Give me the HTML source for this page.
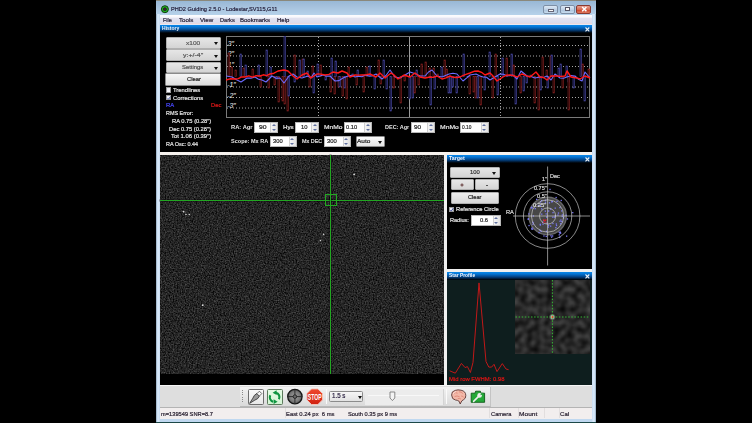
<!DOCTYPE html>
<html><head><meta charset="utf-8">
<style>
*{margin:0;padding:0;box-sizing:border-box}
html,body{width:752px;height:423px;overflow:hidden;background:#000;font-family:"Liberation Sans",sans-serif}
.a{position:absolute}
.t{position:absolute;white-space:pre;line-height:1;transform-origin:0 0;-webkit-text-stroke:0.2px currentColor}
.frame{left:156px;top:0;width:440px;height:423px;background:linear-gradient(#98b8d6 0,#a4c0dc 5px,#b6d2ea 14px,#c0d8f0 30px);border-top:1px solid #8a887c;}
.menubar{left:160px;top:15px;width:432px;height:10px;background:linear-gradient(#fcfcfe 0,#f8f8fc 2px,#e2e2f0 3.5px,#dcdcec 8px,#ead8dc 8.5px,#e6e8f4 9.5px)}
.cap{height:8px;background:linear-gradient(#0a88e8,#0474d4 2px,#034080 5px,#000 8px)}
.btn{background:linear-gradient(#e6e6e6,#d4d4d4);border:1px solid #b0b0b0;border-radius:1px}
.btnw{background:linear-gradient(#f6f6f6,#dcdcdc);border:1px solid #8a8a8a;border-radius:1px}
.inp{background:#fff;border:1px solid #b8b8b8}
.spin{background:linear-gradient(90deg,#f4f4f4,#e2e2e2);border-left:1px solid #d0d0d0}
.cb{background:linear-gradient(135deg,#e4e4ec,#fcfcff);border:0.8px solid #9a9a9a}
</style></head><body>
<div class="a frame"></div>
<div class="a" style="left:156px;top:14px;width:4px;height:409px;background:linear-gradient(90deg,#8a9cb0 0,#c4dcf2 1px,#dcecfc 2px,#c8dcf2 4px)"></div>
<div class="a" style="left:592px;top:14px;width:4px;height:409px;background:linear-gradient(90deg,#c8dcf2 0,#dcecfc 2px,#c4dcf2 3px,#8a9cb0 4px)"></div>
<!-- title bar -->
<svg class="a" style="left:160px;top:4px" width="10" height="11"><circle cx="4.9" cy="5.2" r="3.5" fill="#22c022" stroke="#0a2a0a" stroke-width="0.9"/><circle cx="4.9" cy="5.2" r="1.6" fill="#40203a" stroke="#101010" stroke-width="0.5"/></svg>
<div class="a" style="left:543px;top:5px;width:15px;height:9px;border:1px solid #7d8fa6;border-radius:2px;background:linear-gradient(#dce8f4,#c0d2e6 50%,#a8c0da 51%,#c8dcee)"></div>
<div class="a" style="left:547.5px;top:9px;width:6.5px;height:2.6px;background:#fafafa;border:0.7px solid #667"></div>
<div class="a" style="left:560px;top:5px;width:15px;height:9px;border:1px solid #7d8fa6;border-radius:2px;background:linear-gradient(#dce8f4,#c0d2e6 50%,#a8c0da 51%,#c8dcee)"></div>
<div class="a" style="left:564.5px;top:6.8px;width:5.5px;height:4.6px;background:#fafafa;border:0.9px solid #556"></div>
<div class="a" style="left:576px;top:5px;width:15px;height:9px;border:1px solid #8a3a30;border-radius:2px;background:linear-gradient(#e8a090,#d86a50 50%,#c43a20 51%,#e07a60)"></div>
<svg class="a" style="left:580.5px;top:6.3px" width="7" height="7"><path d="M1.2 1 L5.4 5.2 M5.4 1 L1.2 5.2" stroke="#fff" stroke-width="1.5"/></svg>
<!-- menubar -->
<div class="a menubar"></div>
<!-- history panel -->
<div class="a" style="left:160px;top:25px;width:432px;height:127px;background:#000"></div>
<div class="a cap" style="left:160px;top:25px;width:432px"></div>
<svg class="a" style="left:584.6px;top:26.6px" width="5" height="5"><path d="M0.5 0.5 L4.3 4.3 M4.3 0.5 L0.5 4.3" stroke="#f0f4f8" stroke-width="1.1"/></svg>
<div class="a btn" style="left:166px;top:36.5px;width:55px;height:12px"></div>
<div class="a btn" style="left:166px;top:49px;width:55px;height:11.5px"></div>
<div class="a btn" style="left:166px;top:61.5px;width:55px;height:11.5px"></div>
<div class="a btnw" style="left:165px;top:73px;width:56px;height:12.5px"></div>
<div class="a" style="left:213.5px;top:42px;width:0;height:0;border-left:2.5px solid transparent;border-right:2.5px solid transparent;border-top:3px solid #111"></div><div class="a" style="left:213.5px;top:54.5px;width:0;height:0;border-left:2.5px solid transparent;border-right:2.5px solid transparent;border-top:3px solid #111"></div><div class="a" style="left:213.5px;top:66.5px;width:0;height:0;border-left:2.5px solid transparent;border-right:2.5px solid transparent;border-top:3px solid #111"></div>
<div class="a cb" style="left:165.8px;top:87.3px;width:5.5px;height:5.5px"></div>
<div class="a cb" style="left:165.8px;top:94.8px;width:5.5px;height:5.5px"></div>
<svg class="a" style="left:166px;top:95px" width="6" height="6"><path d="M1.6 3.2 L2.6 4.2 L4.4 1.6" stroke="#5060a8" stroke-width="1" fill="none"/></svg>
<!-- graph -->
<svg class="a" style="left:226px;top:36px" width="365" height="82" viewBox="0 0 365 82">
<rect x="0.5" y="0.5" width="363" height="81" fill="#000" stroke="#7a7a7a" stroke-width="1"/>
<g stroke="#a8a8a8" stroke-width="1" stroke-dasharray="1,2">
<line x1="1" y1="9.5" x2="363" y2="9.5"/>
<line x1="1" y1="20" x2="363" y2="20"/>
<line x1="1" y1="30.5" x2="363" y2="30.5"/>
<line x1="1" y1="51" x2="363" y2="51"/>
<line x1="1" y1="61.5" x2="363" y2="61.5"/>
<line x1="1" y1="72" x2="363" y2="72"/>
<line x1="92.5" y1="1" x2="92.5" y2="81"/>
<line x1="274.5" y1="1" x2="274.5" y2="81"/>
</g>
<line x1="183.5" y1="1" x2="183.5" y2="81" stroke="#9a9a9a" stroke-width="1"/>
<g font-family="Liberation Sans" font-size="6.8" fill="#d4d4d4" font-style="italic" stroke="#d4d4d4" stroke-width="0.15">
<text x="1.8" y="9.6">3"</text><text x="1.8" y="20.1">2"</text><text x="1.8" y="30.6">1"</text>
<text x="1.2" y="51.1">-1"</text><text x="1.2" y="61.6">-2"</text><text x="1.2" y="72.1">-3"</text>
</g>
<rect x="2" y="17.0" width="1.6" height="23.5" fill="#1a0404" stroke="#8a2222" stroke-width="0.6"/>
<rect x="5" y="31.0" width="1.6" height="9.5" fill="#1a0404" stroke="#8a2222" stroke-width="0.6"/>
<rect x="9" y="34.0" width="1.6" height="6.5" fill="#1a0404" stroke="#8a2222" stroke-width="0.6"/>
<rect x="14" y="18.0" width="1.6" height="22.5" fill="#0a0a24" stroke="#4a4aa8" stroke-width="0.6"/>
<rect x="17" y="32.0" width="1.6" height="8.5" fill="#1a0404" stroke="#8a2222" stroke-width="0.6"/>
<rect x="19" y="29.0" width="1.6" height="11.5" fill="#0a0a24" stroke="#4a4aa8" stroke-width="0.6"/>
<rect x="26" y="33.0" width="1.6" height="7.5" fill="#1a0404" stroke="#8a2222" stroke-width="0.6"/>
<rect x="32" y="29.0" width="1.6" height="11.5" fill="#0a0a24" stroke="#4a4aa8" stroke-width="0.6"/>
<rect x="34" y="40.5" width="1.6" height="10.5" fill="#1a0404" stroke="#8a2222" stroke-width="0.6"/>
<rect x="40" y="14.0" width="1.6" height="26.5" fill="#0a0a24" stroke="#4a4aa8" stroke-width="0.6"/>
<rect x="42" y="40.5" width="1.6" height="11.5" fill="#1a0404" stroke="#8a2222" stroke-width="0.6"/>
<rect x="44" y="31.0" width="1.6" height="9.5" fill="#0a0a24" stroke="#4a4aa8" stroke-width="0.6"/>
<rect x="48" y="40.5" width="1.6" height="8.5" fill="#1a0404" stroke="#8a2222" stroke-width="0.6"/>
<rect x="50" y="40.5" width="1.6" height="2.5" fill="#0a0a24" stroke="#4a4aa8" stroke-width="0.6"/>
<rect x="52" y="40.5" width="1.6" height="25.5" fill="#1a0404" stroke="#8a2222" stroke-width="0.6"/>
<rect x="56" y="40.5" width="1.6" height="24.5" fill="#1a0404" stroke="#8a2222" stroke-width="0.6"/>
<rect x="58" y="40.5" width="1.6" height="27.5" fill="#1a0404" stroke="#8a2222" stroke-width="0.6"/>
<rect x="58" y="0.0" width="1.6" height="40.5" fill="#0a0a24" stroke="#4a4aa8" stroke-width="0.6"/>
<rect x="61" y="40.5" width="1.6" height="34.5" fill="#1a0404" stroke="#8a2222" stroke-width="0.6"/>
<rect x="62" y="40.5" width="1.6" height="19.5" fill="#0a0a24" stroke="#4a4aa8" stroke-width="0.6"/>
<rect x="68" y="40.5" width="1.6" height="5.5" fill="#0a0a24" stroke="#4a4aa8" stroke-width="0.6"/>
<rect x="68" y="19.0" width="1.6" height="21.5" fill="#1a0404" stroke="#8a2222" stroke-width="0.6"/>
<rect x="73" y="24.0" width="1.6" height="16.5" fill="#0a0a24" stroke="#4a4aa8" stroke-width="0.6"/>
<rect x="76" y="23.0" width="1.6" height="17.5" fill="#1a0404" stroke="#8a2222" stroke-width="0.6"/>
<rect x="77" y="23.0" width="1.6" height="17.5" fill="#0a0a24" stroke="#4a4aa8" stroke-width="0.6"/>
<rect x="81" y="35.0" width="1.6" height="5.5" fill="#0a0a24" stroke="#4a4aa8" stroke-width="0.6"/>
<rect x="83" y="40.5" width="1.6" height="10.5" fill="#1a0404" stroke="#8a2222" stroke-width="0.6"/>
<rect x="86" y="30.0" width="1.6" height="10.5" fill="#1a0404" stroke="#8a2222" stroke-width="0.6"/>
<rect x="87" y="40.5" width="1.6" height="16.5" fill="#0a0a24" stroke="#4a4aa8" stroke-width="0.6"/>
<rect x="91" y="28.0" width="1.6" height="12.5" fill="#0a0a24" stroke="#4a4aa8" stroke-width="0.6"/>
<rect x="94" y="29.0" width="1.6" height="11.5" fill="#1a0404" stroke="#8a2222" stroke-width="0.6"/>
<rect x="99" y="40.5" width="1.6" height="3.5" fill="#0a0a24" stroke="#4a4aa8" stroke-width="0.6"/>
<rect x="105" y="22.0" width="1.6" height="18.5" fill="#0a0a24" stroke="#4a4aa8" stroke-width="0.6"/>
<rect x="104" y="40.5" width="1.6" height="15.5" fill="#1a0404" stroke="#8a2222" stroke-width="0.6"/>
<rect x="108" y="40.5" width="1.6" height="17.5" fill="#1a0404" stroke="#8a2222" stroke-width="0.6"/>
<rect x="109" y="25.0" width="1.6" height="15.5" fill="#0a0a24" stroke="#4a4aa8" stroke-width="0.6"/>
<rect x="112" y="40.5" width="1.6" height="10.5" fill="#1a0404" stroke="#8a2222" stroke-width="0.6"/>
<rect x="113" y="40.5" width="1.6" height="10.5" fill="#0a0a24" stroke="#4a4aa8" stroke-width="0.6"/>
<rect x="116" y="40.5" width="1.6" height="19.5" fill="#1a0404" stroke="#8a2222" stroke-width="0.6"/>
<rect x="118" y="40.5" width="1.6" height="11.5" fill="#0a0a24" stroke="#4a4aa8" stroke-width="0.6"/>
<rect x="120" y="40.5" width="1.6" height="22.5" fill="#1a0404" stroke="#8a2222" stroke-width="0.6"/>
<rect x="122" y="31.0" width="1.6" height="9.5" fill="#1a0404" stroke="#8a2222" stroke-width="0.6"/>
<rect x="126" y="38.0" width="1.6" height="2.5" fill="#0a0a24" stroke="#4a4aa8" stroke-width="0.6"/>
<rect x="130" y="40.5" width="1.6" height="8.5" fill="#1a0404" stroke="#8a2222" stroke-width="0.6"/>
<rect x="131" y="34.0" width="1.6" height="6.5" fill="#0a0a24" stroke="#4a4aa8" stroke-width="0.6"/>
<rect x="137" y="40.5" width="1.6" height="15.5" fill="#1a0404" stroke="#8a2222" stroke-width="0.6"/>
<rect x="140" y="31.0" width="1.6" height="9.5" fill="#1a0404" stroke="#8a2222" stroke-width="0.6"/>
<rect x="143" y="30.0" width="1.6" height="10.5" fill="#0a0a24" stroke="#4a4aa8" stroke-width="0.6"/>
<rect x="148" y="40.5" width="1.6" height="12.5" fill="#0a0a24" stroke="#4a4aa8" stroke-width="0.6"/>
<rect x="152" y="24.0" width="1.6" height="16.5" fill="#1a0404" stroke="#8a2222" stroke-width="0.6"/>
<rect x="154" y="40.5" width="1.6" height="7.5" fill="#1a0404" stroke="#8a2222" stroke-width="0.6"/>
<rect x="157" y="24.0" width="1.6" height="16.5" fill="#0a0a24" stroke="#4a4aa8" stroke-width="0.6"/>
<rect x="160" y="40.5" width="1.6" height="12.5" fill="#0a0a24" stroke="#4a4aa8" stroke-width="0.6"/>
<rect x="164" y="40.5" width="1.6" height="34.5" fill="#0a0a24" stroke="#4a4aa8" stroke-width="0.6"/>
<rect x="167" y="40.5" width="1.6" height="11.5" fill="#1a0404" stroke="#8a2222" stroke-width="0.6"/>
<rect x="174" y="40.5" width="1.6" height="26.5" fill="#1a0404" stroke="#8a2222" stroke-width="0.6"/>
<rect x="178" y="40.5" width="1.6" height="4.5" fill="#1a0404" stroke="#8a2222" stroke-width="0.6"/>
<rect x="183" y="40.5" width="1.6" height="22.5" fill="#0a0a24" stroke="#4a4aa8" stroke-width="0.6"/>
<rect x="186" y="40.5" width="1.6" height="21.5" fill="#0a0a24" stroke="#4a4aa8" stroke-width="0.6"/>
<rect x="188" y="40.5" width="1.6" height="16.5" fill="#1a0404" stroke="#8a2222" stroke-width="0.6"/>
<rect x="190" y="34.0" width="1.6" height="6.5" fill="#0a0a24" stroke="#4a4aa8" stroke-width="0.6"/>
<rect x="192" y="40.5" width="1.6" height="8.5" fill="#1a0404" stroke="#8a2222" stroke-width="0.6"/>
<rect x="195" y="28.0" width="1.6" height="12.5" fill="#1a0404" stroke="#8a2222" stroke-width="0.6"/>
<rect x="199" y="26.0" width="1.6" height="14.5" fill="#1a0404" stroke="#8a2222" stroke-width="0.6"/>
<rect x="203" y="32.0" width="1.6" height="8.5" fill="#1a0404" stroke="#8a2222" stroke-width="0.6"/>
<rect x="204" y="40.5" width="1.6" height="28.5" fill="#0a0a24" stroke="#4a4aa8" stroke-width="0.6"/>
<rect x="207" y="32.0" width="1.6" height="8.5" fill="#1a0404" stroke="#8a2222" stroke-width="0.6"/>
<rect x="208" y="40.5" width="1.6" height="12.5" fill="#0a0a24" stroke="#4a4aa8" stroke-width="0.6"/>
<rect x="211" y="38.0" width="1.6" height="2.5" fill="#1a0404" stroke="#8a2222" stroke-width="0.6"/>
<rect x="215" y="31.0" width="1.6" height="9.5" fill="#0a0a24" stroke="#4a4aa8" stroke-width="0.6"/>
<rect x="218" y="24.0" width="1.6" height="16.5" fill="#1a0404" stroke="#8a2222" stroke-width="0.6"/>
<rect x="220" y="33.0" width="1.6" height="7.5" fill="#1a0404" stroke="#8a2222" stroke-width="0.6"/>
<rect x="222" y="40.5" width="1.6" height="16.5" fill="#0a0a24" stroke="#4a4aa8" stroke-width="0.6"/>
<rect x="226" y="40.5" width="1.6" height="10.5" fill="#0a0a24" stroke="#4a4aa8" stroke-width="0.6"/>
<rect x="224" y="40.5" width="1.6" height="16.5" fill="#0a0a24" stroke="#4a4aa8" stroke-width="0.6"/>
<rect x="230" y="40.5" width="1.6" height="16.5" fill="#0a0a24" stroke="#4a4aa8" stroke-width="0.6"/>
<rect x="237" y="18.0" width="1.6" height="22.5" fill="#0a0a24" stroke="#4a4aa8" stroke-width="0.6"/>
<rect x="241" y="40.5" width="1.6" height="0.5" fill="#0a0a24" stroke="#4a4aa8" stroke-width="0.6"/>
<rect x="243" y="40.5" width="1.6" height="17.5" fill="#1a0404" stroke="#8a2222" stroke-width="0.6"/>
<rect x="247" y="40.5" width="1.6" height="15.5" fill="#1a0404" stroke="#8a2222" stroke-width="0.6"/>
<rect x="249" y="40.5" width="1.6" height="21.5" fill="#1a0404" stroke="#8a2222" stroke-width="0.6"/>
<rect x="251" y="40.5" width="1.6" height="21.5" fill="#0a0a24" stroke="#4a4aa8" stroke-width="0.6"/>
<rect x="254" y="40.5" width="1.6" height="28.5" fill="#1a0404" stroke="#8a2222" stroke-width="0.6"/>
<rect x="258" y="40.5" width="1.6" height="13.5" fill="#0a0a24" stroke="#4a4aa8" stroke-width="0.6"/>
<rect x="263" y="16.0" width="1.6" height="24.5" fill="#0a0a24" stroke="#4a4aa8" stroke-width="0.6"/>
<rect x="266" y="40.5" width="1.6" height="21.5" fill="#1a0404" stroke="#8a2222" stroke-width="0.6"/>
<rect x="269" y="18.0" width="1.6" height="22.5" fill="#1a0404" stroke="#8a2222" stroke-width="0.6"/>
<rect x="271" y="40.5" width="1.6" height="18.5" fill="#0a0a24" stroke="#4a4aa8" stroke-width="0.6"/>
<rect x="276" y="22.0" width="1.6" height="18.5" fill="#0a0a24" stroke="#4a4aa8" stroke-width="0.6"/>
<rect x="280" y="22.0" width="1.6" height="18.5" fill="#1a0404" stroke="#8a2222" stroke-width="0.6"/>
<rect x="285" y="18.0" width="1.6" height="22.5" fill="#0a0a24" stroke="#4a4aa8" stroke-width="0.6"/>
<rect x="287" y="29.0" width="1.6" height="11.5" fill="#1a0404" stroke="#8a2222" stroke-width="0.6"/>
<rect x="289" y="40.5" width="1.6" height="27.5" fill="#0a0a24" stroke="#4a4aa8" stroke-width="0.6"/>
<rect x="294" y="40.5" width="1.6" height="16.5" fill="#1a0404" stroke="#8a2222" stroke-width="0.6"/>
<rect x="297" y="40.5" width="1.6" height="14.5" fill="#0a0a24" stroke="#4a4aa8" stroke-width="0.6"/>
<rect x="300" y="40.5" width="1.6" height="6.5" fill="#0a0a24" stroke="#4a4aa8" stroke-width="0.6"/>
<rect x="304" y="39.0" width="1.6" height="1.5" fill="#1a0404" stroke="#8a2222" stroke-width="0.6"/>
<rect x="308" y="40.5" width="1.6" height="26.5" fill="#1a0404" stroke="#8a2222" stroke-width="0.6"/>
<rect x="312" y="40.5" width="1.6" height="33.5" fill="#1a0404" stroke="#8a2222" stroke-width="0.6"/>
<rect x="314" y="40.5" width="1.6" height="13.5" fill="#0a0a24" stroke="#4a4aa8" stroke-width="0.6"/>
<rect x="316" y="21.0" width="1.6" height="19.5" fill="#1a0404" stroke="#8a2222" stroke-width="0.6"/>
<rect x="320" y="34.0" width="1.6" height="6.5" fill="#1a0404" stroke="#8a2222" stroke-width="0.6"/>
<rect x="321" y="40.5" width="1.6" height="11.5" fill="#0a0a24" stroke="#4a4aa8" stroke-width="0.6"/>
<rect x="324" y="20.0" width="1.6" height="20.5" fill="#1a0404" stroke="#8a2222" stroke-width="0.6"/>
<rect x="325" y="19.0" width="1.6" height="21.5" fill="#0a0a24" stroke="#4a4aa8" stroke-width="0.6"/>
<rect x="327" y="40.5" width="1.6" height="16.5" fill="#1a0404" stroke="#8a2222" stroke-width="0.6"/>
<rect x="332" y="32.0" width="1.6" height="8.5" fill="#0a0a24" stroke="#4a4aa8" stroke-width="0.6"/>
<rect x="334" y="28.0" width="1.6" height="12.5" fill="#0a0a24" stroke="#4a4aa8" stroke-width="0.6"/>
<rect x="336" y="40.5" width="1.6" height="11.5" fill="#1a0404" stroke="#8a2222" stroke-width="0.6"/>
<rect x="340" y="30.0" width="1.6" height="10.5" fill="#0a0a24" stroke="#4a4aa8" stroke-width="0.6"/>
<rect x="342" y="40.5" width="1.6" height="5.5" fill="#0a0a24" stroke="#4a4aa8" stroke-width="0.6"/>
<rect x="342" y="40.5" width="1.6" height="33.5" fill="#1a0404" stroke="#8a2222" stroke-width="0.6"/>
<rect x="347" y="40.5" width="1.6" height="11.5" fill="#0a0a24" stroke="#4a4aa8" stroke-width="0.6"/>
<rect x="354" y="13.0" width="1.6" height="27.5" fill="#0a0a24" stroke="#4a4aa8" stroke-width="0.6"/>
<rect x="356" y="28.0" width="1.6" height="12.5" fill="#1a0404" stroke="#8a2222" stroke-width="0.6"/>
<rect x="358" y="40.5" width="1.6" height="24.5" fill="#0a0a24" stroke="#4a4aa8" stroke-width="0.6"/>
<rect x="362" y="33.0" width="1.6" height="7.5" fill="#1a0404" stroke="#8a2222" stroke-width="0.6"/>
<polyline fill="none" stroke="#6c6cff" stroke-width="1.1" stroke-linejoin="round" points="0,40 6.0,41.0 10.5,43.8 15.0,46.0 21.0,42.0 25.0,42.099999999999994 29.0,41.0 32.5,43.3 36.0,44.0 40.0,46.0 46.0,40.0 50.0,42.2 54.0,42.0 58.0,47.0 63.0,40.0 67.0,38.0 71.0,41.0 76.0,42.0 82.0,40.0 85.0,42.0 88.0,37.0 91.0,41.0 97.0,39.0 100.5,40.099999999999994 104.0,40.0 109.0,45.0 113.0,44.599999999999994 117.0,42.0 122.0,40.0 125.5,39.3 129.0,41.0 132.3,40.2 135.7,40.8 139.0,39.0 142.5,39.900000000000006 146.0,40.0 150.0,38.0 156.0,43.0 160.0,39.5 164.0,34.0 169.0,41.0 174.0,42.0 179.0,39.0 184.0,36.0 190.0,38.0 194.0,40.0 199.0,40.0 202.5,36.0 206.0,34.0 211.0,40.0 216.0,41.0 219.5,39.400000000000006 223.0,38.0 227.0,37.3 231.0,38.0 237.0,45.0 240.5,42.099999999999994 244.0,39.0 250.0,38.0 253.5,39.7 257.0,41.0 260.5,41.2 264.0,44.0 269.0,41.0 274.0,38.0 277.5,38.3 281.0,40.0 287.0,39.0 291.0,43.0 295.0,35.0 301.0,40.0 305.0,40.400000000000006 309.0,42.0 314.0,41.0 317.5,41.599999999999994 321.0,40.0 325.0,44.0 329.0,38.0 334.0,42.0 337.5,42.2 341.0,41.0 345.0,39.599999999999994 349.0,40.0 352.5,43.3 356.0,45.0 359.0,36.0 364.0,42.0"/>
<polyline fill="none" stroke="#ff1818" stroke-width="1.4" stroke-linejoin="round" points="0,44 4.5,42.8 9.0,43.0 12.300000000000011,42.599999999999994 15.699999999999989,40.900000000000006 19.0,41.0 22.80000000000001,39.8 26.5,41.2 30.19999999999999,39.7 34.0,40.0 37.30000000000001,38.8 40.69999999999999,39.599999999999994 44.0,38.0 48.0,37.2 52.0,35.0 58.0,34.0 62.0,35.0 67.0,40.0 71.0,43.0 76.0,39.0 81.0,37.0 85.0,42.0 91.0,38.0 95.0,38.099999999999994 99.0,39.0 103.0,38.400000000000006 107.0,36.0 112.0,37.0 116.0,35.0 121.0,37.0 124.0,41.0 129.0,39.0 132.5,39.099999999999994 136.0,39.0 140.0,38.900000000000006 144.0,38.0 150.0,41.0 154.0,37.0 159.0,42.0 165.0,37.0 168.5,39.400000000000006 172.0,43.0 178.0,39.0 184.0,41.0 189.0,37.0 194.0,41.0 199.0,42.0 204.0,41.0 207.5,41.400000000000006 211.0,40.0 216.0,43.0 220.0,41.900000000000006 224.0,40.0 227.3,41.3 230.7,41.5 234.0,41.0 237.3,39.3 240.7,38.099999999999994 244.0,37.0 248.0,35.3 252.0,35.0 255.5,36.3 259.0,39.0 264.0,37.0 267.0,40.0 271.0,45.0 277.0,41.0 280.5,39.099999999999994 284.0,39.0 287.5,39.599999999999994 291.0,41.0 296.0,38.0 300.0,39.7 304.0,41.0 310.0,36.0 314.0,41.0 317.5,41.5 321.0,44.0 325.0,40.0 331.0,40.0 335.0,40.400000000000006 339.0,40.0 341.0,35.0 345.0,41.0 349.5,41.7 354.0,43.0 359.0,40.0 364.0,42.0"/>
</svg>
<!-- controls -->
<div class="a inp" style="left:254px;top:122px;width:24px;height:11px"></div><div class="a spin" style="left:270px;top:123px;width:7px;height:9px"></div><div class="a" style="left:271.5px;top:124px;width:0;height:0;border-left:2px solid transparent;border-right:2px solid transparent;border-bottom:2px solid #6070a0"></div><div class="a" style="left:271.5px;top:129px;width:0;height:0;border-left:2px solid transparent;border-right:2px solid transparent;border-top:2px solid #6070a0"></div><div class="a inp" style="left:295px;top:122px;width:24px;height:11px"></div><div class="a spin" style="left:311px;top:123px;width:7px;height:9px"></div><div class="a" style="left:312.5px;top:124px;width:0;height:0;border-left:2px solid transparent;border-right:2px solid transparent;border-bottom:2px solid #6070a0"></div><div class="a" style="left:312.5px;top:129px;width:0;height:0;border-left:2px solid transparent;border-right:2px solid transparent;border-top:2px solid #6070a0"></div><div class="a inp" style="left:344px;top:122px;width:28px;height:11px"></div><div class="a spin" style="left:364px;top:123px;width:7px;height:9px"></div><div class="a" style="left:365.5px;top:124px;width:0;height:0;border-left:2px solid transparent;border-right:2px solid transparent;border-bottom:2px solid #6070a0"></div><div class="a" style="left:365.5px;top:129px;width:0;height:0;border-left:2px solid transparent;border-right:2px solid transparent;border-top:2px solid #6070a0"></div><div class="a inp" style="left:411px;top:122px;width:24px;height:11px"></div><div class="a spin" style="left:427px;top:123px;width:7px;height:9px"></div><div class="a" style="left:428.5px;top:124px;width:0;height:0;border-left:2px solid transparent;border-right:2px solid transparent;border-bottom:2px solid #6070a0"></div><div class="a" style="left:428.5px;top:129px;width:0;height:0;border-left:2px solid transparent;border-right:2px solid transparent;border-top:2px solid #6070a0"></div><div class="a inp" style="left:460px;top:122px;width:28.5px;height:11px"></div><div class="a spin" style="left:480.5px;top:123px;width:7px;height:9px"></div><div class="a" style="left:482.0px;top:124px;width:0;height:0;border-left:2px solid transparent;border-right:2px solid transparent;border-bottom:2px solid #6070a0"></div><div class="a" style="left:482.0px;top:129px;width:0;height:0;border-left:2px solid transparent;border-right:2px solid transparent;border-top:2px solid #6070a0"></div><div class="a inp" style="left:270px;top:136px;width:26.5px;height:11px"></div><div class="a spin" style="left:288.5px;top:137px;width:7px;height:9px"></div><div class="a" style="left:290.0px;top:138px;width:0;height:0;border-left:2px solid transparent;border-right:2px solid transparent;border-bottom:2px solid #6070a0"></div><div class="a" style="left:290.0px;top:143px;width:0;height:0;border-left:2px solid transparent;border-right:2px solid transparent;border-top:2px solid #6070a0"></div><div class="a inp" style="left:324px;top:136px;width:26.5px;height:11px"></div><div class="a spin" style="left:342.5px;top:137px;width:7px;height:9px"></div><div class="a" style="left:344.0px;top:138px;width:0;height:0;border-left:2px solid transparent;border-right:2px solid transparent;border-bottom:2px solid #6070a0"></div><div class="a" style="left:344.0px;top:143px;width:0;height:0;border-left:2px solid transparent;border-right:2px solid transparent;border-top:2px solid #6070a0"></div>
<div class="a btnw" style="left:356px;top:136px;width:29px;height:11px;background:linear-gradient(#fafafa,#e4e4e4)"></div>
<div class="a" style="left:377.5px;top:140.5px;width:0;height:0;border-left:2.5px solid transparent;border-right:2.5px solid transparent;border-top:3px solid #111"></div>
<!-- sashes -->
<div class="a" style="left:160px;top:152px;width:432px;height:3px;background:#f6f2ee"></div>
<!-- camera -->
<div class="a" style="left:160px;top:155px;width:284px;height:230px;background:#000"></div>
<svg class="a" style="left:160px;top:155px" width="284" height="219">
<filter id="nz" x="0" y="0" width="100%" height="100%" color-interpolation-filters="sRGB"><feTurbulence type="fractalNoise" baseFrequency="0.75" numOctaves="2" seed="3"/>
<feColorMatrix type="matrix" values="0.45 0 0 0 -0.08  0.45 0 0 0 -0.08  0.45 0 0 0 -0.08  0 0 0 0 1"/><feGaussianBlur stdDeviation="0.25"/></filter>
<rect width="284" height="219" fill="#2c2c2c"/>
<rect width="284" height="219" filter="url(#nz)" opacity="1"/>
<circle cx="194.1" cy="19.4" r="0.9" fill="#ddd"/>
<circle cx="23.6" cy="56.6" r="0.9" fill="#ddd"/>
<circle cx="26" cy="59.5" r="0.8" fill="#ccc"/>
<circle cx="29.3" cy="59.5" r="0.8" fill="#ccc"/>
<circle cx="163.6" cy="79.4" r="0.8" fill="#ccc"/>
<circle cx="160.4" cy="85.6" r="0.8" fill="#ccc"/>
<circle cx="42.7" cy="150.2" r="0.9" fill="#ddd"/>
</svg>
<div class="a" style="left:160px;top:199.5px;width:284px;height:1px;background:#22a622;box-shadow:0 0 0 0.6px rgba(10,0,10,0.5)"></div>
<div class="a" style="left:329.6px;top:155px;width:1px;height:218.7px;background:#22a622;box-shadow:0 0 0 0.6px rgba(10,0,10,0.5)"></div>
<div class="a" style="left:324.6px;top:194.2px;width:12px;height:11.4px;border:0.9px solid #22a822"></div>
<div class="a" style="left:444px;top:155px;width:3px;height:230px;background:#f0f0f0"></div>
<!-- target panel -->
<div class="a" style="left:447px;top:155px;width:145px;height:114px;background:#000"></div>
<div class="a cap" style="left:447px;top:155px;width:145px"></div>
<svg class="a" style="left:584.6px;top:156.6px" width="5" height="5"><path d="M0.5 0.5 L4.3 4.3 M4.3 0.5 L0.5 4.3" stroke="#f0f4f8" stroke-width="1.1"/></svg>
<div class="a btn" style="left:450px;top:166.5px;width:50px;height:11.5px"></div>
<div class="a" style="left:492px;top:171.5px;width:0;height:0;border-left:2.5px solid transparent;border-right:2.5px solid transparent;border-top:3px solid #111"></div>
<div class="a btn" style="left:450.5px;top:178.6px;width:23px;height:11.5px"></div>
<div class="a btn" style="left:475.4px;top:178.6px;width:23.6px;height:11.5px"></div>
<svg class="a" style="left:459.6px;top:183px" width="4" height="4"><path d="M2 0.4 V3.6 M0.4 2 H3.6" stroke="#5a2a2a" stroke-width="0.9"/></svg>
<div class="a" style="left:486.3px;top:184.8px;width:1.5px;height:1px;background:#555"></div>
<div class="a btnw" style="left:450.5px;top:191.5px;width:48.5px;height:12px;background:linear-gradient(#eeeeee,#d8d8d8);border-color:#b0b0b0"></div>
<div class="a cb" style="left:448.8px;top:206.7px;width:5.2px;height:5.2px"></div>
<svg class="a" style="left:449px;top:207px" width="6" height="6"><path d="M1.4 3 L2.4 4.1 L4.2 1.2" stroke="#3a4a98" stroke-width="1" fill="none"/></svg>
<div class="a inp" style="left:471px;top:215px;width:29.5px;height:11px"></div><div class="a spin" style="left:492.5px;top:216px;width:7px;height:9px"></div><div class="a" style="left:494.0px;top:217px;width:0;height:0;border-left:2px solid transparent;border-right:2px solid transparent;border-bottom:2px solid #6070a0"></div><div class="a" style="left:494.0px;top:222px;width:0;height:0;border-left:2px solid transparent;border-right:2px solid transparent;border-top:2px solid #6070a0"></div>
<svg class="a" style="left:447px;top:163px" width="145" height="106">
<g transform="translate(-447,-163)">
<circle cx="547.6" cy="216" r="18.7" fill="#464646" stroke="#686868" stroke-width="1.4"/>
<rect x="539.7" y="205.2" width="1.3" height="1.3" fill="#7a78f0"/>
<rect x="543.1" y="219.8" width="1.3" height="1.3" fill="#7a78f0"/>
<rect x="552.2" y="216.6" width="1.3" height="1.3" fill="#7a78f0"/>
<rect x="528.4" y="224.9" width="1.3" height="1.3" fill="#7a78f0"/>
<rect x="550.3" y="235.1" width="1.3" height="1.3" fill="#7a78f0"/>
<rect x="531.6" y="207.3" width="1.3" height="1.3" fill="#7a78f0"/>
<rect x="560.3" y="219.4" width="1.3" height="1.3" fill="#7a78f0"/>
<rect x="559.6" y="231.4" width="1.3" height="1.3" fill="#7a78f0"/>
<rect x="550.0" y="208.5" width="1.3" height="1.3" fill="#7a78f0"/>
<rect x="541.0" y="208.2" width="1.3" height="1.3" fill="#7a78f0"/>
<rect x="559.4" y="220.6" width="1.3" height="1.3" fill="#7a78f0"/>
<rect x="544.7" y="210.5" width="1.3" height="1.3" fill="#7a78f0"/>
<rect x="534.6" y="208.0" width="1.3" height="1.3" fill="#7a78f0"/>
<rect x="551.1" y="201.2" width="1.3" height="1.3" fill="#7a78f0"/>
<rect x="530.6" y="207.1" width="1.3" height="1.3" fill="#7a78f0"/>
<rect x="544.9" y="199.6" width="1.3" height="1.3" fill="#7a78f0"/>
<rect x="555.7" y="223.4" width="1.3" height="1.3" fill="#7a78f0"/>
<rect x="555.2" y="227.0" width="1.3" height="1.3" fill="#7a78f0"/>
<rect x="549.4" y="188.8" width="1.3" height="1.3" fill="#7a78f0"/>
<rect x="540.5" y="230.7" width="1.3" height="1.3" fill="#7a78f0"/>
<rect x="530.9" y="206.6" width="1.3" height="1.3" fill="#7a78f0"/>
<rect x="561.0" y="210.3" width="1.3" height="1.3" fill="#7a78f0"/>
<rect x="561.1" y="221.0" width="1.3" height="1.3" fill="#7a78f0"/>
<rect x="565.4" y="214.6" width="1.3" height="1.3" fill="#7a78f0"/>
<rect x="532.0" y="228.5" width="1.3" height="1.3" fill="#7a78f0"/>
<rect x="559.1" y="236.8" width="1.3" height="1.3" fill="#7a78f0"/>
<rect x="566.0" y="235.5" width="1.3" height="1.3" fill="#7a78f0"/>
<rect x="554.6" y="207.5" width="1.3" height="1.3" fill="#7a78f0"/>
<rect x="541.1" y="213.5" width="1.3" height="1.3" fill="#7a78f0"/>
<rect x="560.6" y="199.8" width="1.3" height="1.3" fill="#7a78f0"/>
<rect x="539.7" y="224.4" width="1.3" height="1.3" fill="#7a78f0"/>
<rect x="559.1" y="232.2" width="1.3" height="1.3" fill="#7a78f0"/>
<rect x="548.0" y="224.6" width="1.3" height="1.3" fill="#7a78f0"/>
<rect x="545.8" y="230.7" width="1.3" height="1.3" fill="#7a78f0"/>
<rect x="546.0" y="216.4" width="1.3" height="1.3" fill="#7a78f0"/>
<rect x="541.0" y="200.0" width="1.3" height="1.3" fill="#7a78f0"/>
<rect x="539.9" y="201.3" width="1.3" height="1.3" fill="#7a78f0"/>
<rect x="548.0" y="210.4" width="1.3" height="1.3" fill="#7a78f0"/>
<rect x="531.0" y="228.3" width="1.3" height="1.3" fill="#7a78f0"/>
<rect x="537.8" y="205.0" width="1.3" height="1.3" fill="#7a78f0"/>
<rect x="558.6" y="234.2" width="1.3" height="1.3" fill="#7a78f0"/>
<rect x="558.6" y="231.7" width="1.3" height="1.3" fill="#7a78f0"/>
<rect x="553.9" y="216.5" width="1.3" height="1.3" fill="#7a78f0"/>
<rect x="559.2" y="231.9" width="1.3" height="1.3" fill="#7a78f0"/>
<rect x="539.7" y="223.7" width="1.3" height="1.3" fill="#7a78f0"/>
<rect x="554.7" y="215.1" width="1.3" height="1.3" fill="#7a78f0"/>
<rect x="559.9" y="223.1" width="1.3" height="1.3" fill="#7a78f0"/>
<rect x="546.3" y="222.4" width="1.3" height="1.3" fill="#7a78f0"/>
<rect x="566.8" y="218.3" width="1.3" height="1.3" fill="#7a78f0"/>
<rect x="560.0" y="232.5" width="1.3" height="1.3" fill="#7a78f0"/>
<rect x="572.1" y="212.0" width="1.3" height="1.3" fill="#7a78f0"/>
<rect x="545.6" y="235.8" width="1.3" height="1.3" fill="#7a78f0"/>
<rect x="548.8" y="202.2" width="1.3" height="1.3" fill="#7a78f0"/>
<rect x="539.3" y="229.5" width="1.3" height="1.3" fill="#7a78f0"/>
<rect x="557.3" y="214.4" width="1.3" height="1.3" fill="#7a78f0"/>
<rect x="555.5" y="196.9" width="1.3" height="1.3" fill="#7a78f0"/>
<rect x="528.2" y="213.3" width="1.3" height="1.3" fill="#7a78f0"/>
<rect x="543.3" y="235.3" width="1.3" height="1.3" fill="#7a78f0"/>
<rect x="557.8" y="212.4" width="1.3" height="1.3" fill="#7a78f0"/>
<rect x="561.7" y="214.3" width="1.3" height="1.3" fill="#7a78f0"/>
<rect x="551.0" y="236.5" width="1.3" height="1.3" fill="#7a78f0"/>
<rect x="550.0" y="225.5" width="1.3" height="1.3" fill="#7a78f0"/>
<rect x="556.4" y="200.8" width="1.3" height="1.3" fill="#7a78f0"/>
<rect x="551.7" y="200.9" width="1.3" height="1.3" fill="#7a78f0"/>
<rect x="552.4" y="212.0" width="1.3" height="1.3" fill="#7a78f0"/>
<rect x="527.7" y="218.1" width="1.3" height="1.3" fill="#7a78f0"/>
<rect x="542.4" y="223.5" width="1.3" height="1.3" fill="#7a78f0"/>
<rect x="531.4" y="227.4" width="1.3" height="1.3" fill="#7a78f0"/>
<rect x="544.8" y="201.6" width="1.3" height="1.3" fill="#7a78f0"/>
<rect x="552.3" y="222.8" width="1.3" height="1.3" fill="#7a78f0"/>
<rect x="559.7" y="232.0" width="1.3" height="1.3" fill="#7a78f0"/>
<rect x="536.0" y="198.7" width="1.3" height="1.3" fill="#7a78f0"/>
<rect x="555.9" y="224.9" width="1.3" height="1.3" fill="#7a78f0"/>
<rect x="545.5" y="213.3" width="1.3" height="1.3" fill="#7a78f0"/>
<rect x="532.4" y="221.8" width="1.3" height="1.3" fill="#7a78f0"/>
<rect x="552.0" y="235.3" width="1.3" height="1.3" fill="#7a78f0"/>
<rect x="547.7" y="226.4" width="1.3" height="1.3" fill="#7a78f0"/>
<rect x="532.3" y="223.6" width="1.3" height="1.3" fill="#7a78f0"/>
<rect x="542.2" y="221.7" width="1.3" height="1.3" fill="#7a78f0"/>
<rect x="559.3" y="207.0" width="1.3" height="1.3" fill="#7a78f0"/>
<rect x="532.7" y="215.3" width="1.3" height="1.3" fill="#7a78f0"/>
<rect x="562.9" y="217.3" width="1.3" height="1.3" fill="#7a78f0"/>
<rect x="561.6" y="215.8" width="1.3" height="1.3" fill="#7a78f0"/>
<rect x="527.6" y="218.7" width="1.3" height="1.3" fill="#7a78f0"/>
<rect x="538.4" y="232.0" width="1.3" height="1.3" fill="#7a78f0"/>
<g fill="none" stroke="#d4d4d4" stroke-width="0.65">
<circle cx="547.6" cy="216" r="32.3"/>
<circle cx="547.6" cy="216" r="24.2"/>
<circle cx="547.6" cy="216" r="16.2"/>
<circle cx="547.6" cy="216" r="8.1"/>
<line x1="513" y1="216" x2="590" y2="216"/>
<line x1="547.6" y1="166.5" x2="547.6" y2="265.5"/>
</g>
<path d="M543.2 219.5 L546.4 222.5 M546.4 219.5 L543.2 222.5" stroke="#d02020" stroke-width="1.1"/>
</g>
</svg>
<div class="a" style="left:447px;top:268.5px;width:145px;height:3.5px;background:#f0f0f0"></div>
<!-- star profile -->
<div class="a" style="left:447px;top:272px;width:145px;height:113px;background:#0e1e1e"></div>
<div class="a cap" style="left:447px;top:272px;width:145px"></div>
<svg class="a" style="left:584.6px;top:273.6px" width="5" height="5"><path d="M0.5 0.5 L4.3 4.3 M4.3 0.5 L0.5 4.3" stroke="#f0f4f8" stroke-width="1.1"/></svg>
<svg class="a" style="left:447px;top:279px" width="145" height="106">
<g transform="translate(-447,-279)">
<filter id="nz3" x="0" y="0" width="100%" height="100%" color-interpolation-filters="sRGB"><feTurbulence type="fractalNoise" baseFrequency="0.15" numOctaves="1" seed="11"/>
<feColorMatrix type="matrix" values="0.36 0 0 0 -0.02  0.36 0 0 0 -0.02  0.36 0 0 0 -0.02  0 0 0 0 1"/><feGaussianBlur stdDeviation="0.6"/></filter>
<rect x="515.5" y="280" width="74" height="73.8" fill="#3a3a3a" filter="url(#nz3)"/>
<radialGradient id="st"><stop offset="0" stop-color="#ffffff"/><stop offset="0.35" stop-color="#c8c8c8"/><stop offset="1" stop-color="#3a3a3a" stop-opacity="0"/></radialGradient>
<circle cx="552.4" cy="317" r="4" fill="url(#st)"/>
<g stroke="#34b834" stroke-width="1" stroke-dasharray="1.5,1.6">
<line x1="515.5" y1="317" x2="589.5" y2="317"/>
<line x1="552.4" y1="280" x2="552.4" y2="354"/>
</g>
<circle cx="552.4" cy="317" r="1" fill="#e04020"/>
<polyline fill="none" stroke="#c01818" stroke-width="1" stroke-linejoin="round" points="449.7,370.8 455.3,373.2 461.4,363.4 465.1,367.6 467.4,366.6 470.4,372.5 473,362.4 479,282.9 486,361.5 488.8,367.1 491.6,367.1 494,364.3 497,371.6 502.3,363.6 506,369 508.6,369.7"/>
</g>
</svg>
<!-- toolbar -->
<div class="a" style="left:160px;top:385px;width:432px;height:22.5px;background:#dedede;border-top:1.5px solid #f6f6f6"></div>
<div class="a" style="left:240px;top:386.5px;width:250.5px;height:20.8px;background:linear-gradient(#f2f2f2,#e6e6e6 50%,#dadada);border-right:1px solid #c4c4c4;border-bottom:1px solid #b8b8b8"></div>
<div class="a" style="left:241.8px;top:389.5px;width:1.2px;height:13.5px;background:repeating-linear-gradient(#8a8a8a 0 1px,transparent 1px 2.2px)"></div>
<div class="a" style="left:247.7px;top:389px;width:16.2px;height:16px;border:1px solid #6e6e6e;border-radius:1.5px;background:linear-gradient(#fafafa,#e8e8e8)"></div>
<svg class="a" style="left:248px;top:389px" width="16" height="16"><g transform="rotate(-45 8 8)">
<path d="M-1 8 L5 6.6 Q8 5 11 6.2 L11 9.8 Q8 11 5 9.4 Z" fill="#9c9c9c" stroke="#303030" stroke-width="0.8"/>
<rect x="11" y="6.3" width="3.5" height="3.4" fill="#f8f8f8" stroke="#404040" stroke-width="0.7"/>
</g></svg>
<div class="a" style="left:267.1px;top:389px;width:16.2px;height:16px;border:1px solid #5c7a5c;border-radius:1.5px;background:linear-gradient(#e4fae4,#d4f4d4)"></div>
<svg class="a" style="left:267px;top:389px" width="16" height="16">
<path d="M9 3.7 A4.5 4.5 0 0 1 11.9 10.2" fill="none" stroke="#0e9440" stroke-width="2.1"/>
<path d="M6.2 12.7 A4.5 4.5 0 0 1 3.3 6.2" fill="none" stroke="#0e9440" stroke-width="2.1"/>
<path d="M5.6 3.7 L9.6 1.3 L9.6 6.1 Z" fill="#0e9440"/>
<path d="M10.6 12.7 L6.6 10.3 L6.6 15.1 Z" fill="#0e9440"/>
</svg>
<svg class="a" style="left:286px;top:388px" width="18" height="18">
<defs><radialGradient id="ch"><stop offset="0" stop-color="#a0a0a0"/><stop offset="0.7" stop-color="#7a7a7a"/><stop offset="1" stop-color="#5a5a5a"/></radialGradient></defs>
<circle cx="8.9" cy="8.6" r="7.2" fill="url(#ch)" stroke="#161616" stroke-width="1.3"/>
<path d="M2 8.6 H15.8 M8.9 1.8 V15.4" stroke="#262626" stroke-width="0.9"/>
<circle cx="8.9" cy="8.6" r="1.8" fill="#6a6a6a" stroke="#202020" stroke-width="0.9"/>
</svg>
<svg class="a" style="left:306px;top:388px" width="18" height="18">
<defs><linearGradient id="sg" x1="0" y1="0" x2="0" y2="1"><stop offset="0" stop-color="#f04a30"/><stop offset="1" stop-color="#d02010"/></linearGradient></defs>
<path d="M5.5 0.9 H11.9 L16.5 5.5 V11.9 L11.9 16.5 H5.5 L0.9 11.9 V5.5 Z" fill="url(#sg)" stroke="#f4c8c0" stroke-width="0.9"/>
<text x="0" y="0" font-family="Liberation Sans" font-weight="bold" font-size="6.2" fill="#fff" text-anchor="middle" transform="translate(8.7,11.6) scale(0.82,1.45)">STOP</text>
</svg>
<div class="a" style="left:326.3px;top:389px;width:1px;height:15px;background:#c0c0c0;border-right:1px solid #fafafa"></div>
<div class="a" style="left:329.3px;top:391px;width:34px;height:11.4px;border:1px solid #8c8c8c;border-radius:1.5px;background:linear-gradient(#f6f6f6,#e2e2e2)"></div>
<div class="a" style="left:357.5px;top:395.5px;width:0;height:0;border-left:2.5px solid transparent;border-right:2.5px solid transparent;border-top:3px solid #111"></div>
<div class="t" style="left:331.5px;top:393.2px;font-size:6.5px;color:#2a2040;transform:scaleX(0.95)">1.5 s</div>
<div class="a" style="left:365px;top:388.5px;width:79px;height:16px;background:#ececec;border-right:1px solid #d4d4d4"></div>
<div class="a" style="left:368px;top:395px;width:71px;height:1.2px;background:#c4c4c4;border-bottom:0.6px solid #f8f8f8"></div>
<svg class="a" style="left:389px;top:391px" width="7" height="11"><path d="M1 1 H5.8 V7 L3.4 9.6 L1 7 Z" fill="#f4f4f4" stroke="#707070" stroke-width="0.8"/></svg>
<div class="a" style="left:446.2px;top:389px;width:1px;height:15px;background:#c0c0c0;border-right:1px solid #fafafa"></div>
<svg class="a" style="left:450px;top:389px" width="18" height="16">
<path d="M1.6 6 Q1.4 2.2 5.2 1.4 Q8 0.4 11 1.2 Q15.6 2 15.8 6.4 Q16 9.6 13.4 10.8 Q11.6 11.6 11.2 13 L10.2 15 L9.2 12.4 Q7.4 11 5.4 11 Q1.8 10.4 1.6 6 Z" fill="#f2b8a8" stroke="#4a2626" stroke-width="0.8"/>
<path d="M3.5 4.5 Q5.5 2.8 7.5 4.2 M9 2.8 Q11.5 2.6 12.8 4.6 M4.5 7.6 Q7 6.2 9.6 7.8 M11.2 7 Q13 6.8 14 8.6 M7.8 9.6 Q9.6 9 11 10.2" fill="none" stroke="#d87868" stroke-width="0.7"/>
<path d="M3 5 Q4 3 6 2.6" fill="none" stroke="#fff0ea" stroke-width="0.8"/>
</svg>
<svg class="a" style="left:470px;top:390px" width="16" height="14">
<path d="M1.2 3.2 H5 L5.6 1.2 H10.4 L11 3.2 H14.6 V12.3 H1.2 Z" fill="#24a838" stroke="#0e5a18" stroke-width="0.9"/>
<path d="M3.6 11.4 L8.6 6.4" stroke="#eeeeee" stroke-width="1.5" stroke-linecap="round"/>
<circle cx="9.6" cy="5.4" r="2.3" fill="#eeeeee"/>
<path d="M9.8 5.2 L12.6 2.4 L13.4 4.4 Z" fill="#24a838"/>
</svg>
<!-- status -->
<div class="a" style="left:160px;top:407px;width:432px;height:11.5px;background:#f2eeee;border-top:1px solid #b4b4b4"></div>
<div class="a" style="left:284.5px;top:408px;width:1px;height:10px;background:#e2dede"></div>
<div class="a" style="left:488.8px;top:408px;width:1px;height:10px;background:#e2dede"></div>
<div class="a" style="left:517.5px;top:408px;width:1px;height:10px;background:#e2dede"></div>
<div class="a" style="left:543.8px;top:408px;width:1px;height:10px;background:#e2dede"></div>
<div class="a" style="left:558.5px;top:408px;width:1px;height:10px;background:#e2dede"></div>
<div class="a" style="left:156px;top:421.8px;width:440px;height:1.2px;background:#1c4848"></div>
<div class="t" style="left:170.6px;top:6.4px;font-size:6.1px;color:#221c38;transform:scaleX(0.922)">PHD2 Guiding 2.5.0 - Lodestar,SV115,G11</div>
<div class="t" style="left:163.4px;top:16.5px;font-size:6.1px;color:#201a30;transform:scaleX(0.901)">File</div>
<div class="t" style="left:179.1px;top:16.5px;font-size:6.1px;color:#201a30;transform:scaleX(1.007)">Tools</div>
<div class="t" style="left:199.9px;top:16.5px;font-size:6.1px;color:#201a30;transform:scaleX(1.010)">View</div>
<div class="t" style="left:219.5px;top:16.5px;font-size:6.1px;color:#201a30;transform:scaleX(0.928)">Darks</div>
<div class="t" style="left:240.1px;top:16.5px;font-size:6.1px;color:#201a30;transform:scaleX(0.988)">Bookmarks</div>
<div class="t" style="left:276.6px;top:16.5px;font-size:6.1px;color:#201a30;transform:scaleX(0.982)">Help</div>
<div class="t" style="left:161.6px;top:26.1px;font-size:5.2px;color:#f4f8ff;font-weight:bold;-webkit-text-stroke:0;transform:scaleX(0.968)">History</div>
<div class="t" style="left:185.6px;top:39.7px;font-size:6.0px;color:#585858;transform:scaleX(1.090)">x100</div>
<div class="t" style="left:183.1px;top:51.9px;font-size:6.0px;color:#585858;transform:scaleX(1.170)">y:+/-4&#x27;&#x27;</div>
<div class="t" style="left:182.4px;top:64.1px;font-size:6.0px;color:#505050;transform:scaleX(0.978)">Settings</div>
<div class="t" style="left:186.6px;top:76.1px;font-size:6.0px;color:#1a1a1a;transform:scaleX(0.969)">Clear</div>
<div class="t" style="left:172.9px;top:87.1px;font-size:6.0px;color:#e6e6e6;transform:scaleX(0.979)">Trendlines</div>
<div class="t" style="left:172.9px;top:94.5px;font-size:6.0px;color:#e6e6e6;transform:scaleX(0.984)">Corrections</div>
<div class="t" style="left:165.5px;top:102.1px;font-size:6.0px;color:#4848ff;transform:scaleX(0.984)">RA</div>
<div class="t" style="left:211.0px;top:102.1px;font-size:6.0px;color:#e01818;transform:scaleX(0.975)">Dec</div>
<div class="t" style="left:165.5px;top:109.6px;font-size:6.0px;color:#e6e6e6;transform:scaleX(0.905)">RMS Error:</div>
<div class="t" style="left:171.6px;top:117.6px;font-size:6.0px;color:#e6e6e6;transform:scaleX(0.962)">RA 0.75 (0.28&quot;)</div>
<div class="t" style="left:168.8px;top:125.5px;font-size:6.0px;color:#e6e6e6;transform:scaleX(0.963)">Dec 0.75 (0.28&quot;)</div>
<div class="t" style="left:170.5px;top:133.0px;font-size:6.0px;color:#e6e6e6;transform:scaleX(0.985)">Tot 1.06 (0.39&quot;)</div>
<div class="t" style="left:165.5px;top:141.3px;font-size:6.0px;color:#e6e6e6;transform:scaleX(0.906)">RA Osc: 0.44</div>
<div class="t" style="left:230.6px;top:124.1px;font-size:6.0px;color:#e6e6e6;font-weight:bold;-webkit-text-stroke:0;transform:scaleX(0.962)">RA: Agr</div>
<div class="t" style="left:282.6px;top:124.1px;font-size:6.0px;color:#e6e6e6;transform:scaleX(1.029)">Hys</div>
<div class="t" style="left:323.5px;top:124.1px;font-size:6.0px;color:#e6e6e6;transform:scaleX(1.103)">MnMo</div>
<div class="t" style="left:384.8px;top:124.1px;font-size:6.0px;color:#e6e6e6;font-weight:bold;-webkit-text-stroke:0;transform:scaleX(0.917)">DEC: Agr</div>
<div class="t" style="left:439.5px;top:124.1px;font-size:6.0px;color:#e6e6e6;transform:scaleX(1.128)">MnMo</div>
<div class="t" style="left:230.6px;top:138.1px;font-size:6.0px;color:#e6e6e6;font-weight:bold;-webkit-text-stroke:0;transform:scaleX(0.921)">Scope: Mx RA</div>
<div class="t" style="left:301.6px;top:138.1px;font-size:6.0px;color:#e6e6e6;transform:scaleX(0.902)">Mx DEC</div>
<div class="t" style="left:259.2px;top:124.1px;font-size:6.0px;color:#222;transform:scaleX(1.140)">90</div>
<div class="t" style="left:300.9px;top:124.1px;font-size:6.0px;color:#222;transform:scaleX(0.972)">10</div>
<div class="t" style="left:346.2px;top:124.1px;font-size:6.0px;color:#222;transform:scaleX(0.957)">0.10</div>
<div class="t" style="left:414.0px;top:124.1px;font-size:6.0px;color:#222;transform:scaleX(1.072)">90</div>
<div class="t" style="left:461.9px;top:124.1px;font-size:6.0px;color:#222;transform:scaleX(0.802)">0.10</div>
<div class="t" style="left:272.7px;top:138.1px;font-size:6.0px;color:#222;transform:scaleX(0.968)">300</div>
<div class="t" style="left:327.4px;top:138.1px;font-size:6.0px;color:#222;transform:scaleX(0.979)">300</div>
<div class="t" style="left:357.4px;top:138.1px;font-size:6.0px;color:#222;transform:scaleX(1.084)">Auto</div>
<div class="t" style="left:448.5px;top:156.0px;font-size:5.2px;color:#f4f8ff;font-weight:bold;-webkit-text-stroke:0;transform:scaleX(1.024)">Target</div>
<div class="t" style="left:469.5px;top:169.3px;font-size:6.0px;color:#303030;transform:scaleX(0.979)">100</div>
<div class="t" style="left:468.4px;top:194.3px;font-size:6.0px;color:#1a1a1a;transform:scaleX(0.940)">Clear</div>
<div class="t" style="left:455.7px;top:206.4px;font-size:6.0px;color:#e6e6e6;transform:scaleX(0.958)">Reference Circle</div>
<div class="t" style="left:449.5px;top:216.6px;font-size:6.0px;color:#e6e6e6;transform:scaleX(0.927)">Radius:</div>
<div class="t" style="left:480.4px;top:216.6px;font-size:6.0px;color:#222;transform:scaleX(0.971)">0.6</div>
<div class="t" style="left:549.6px;top:173.7px;font-size:5.4px;color:#d8d8d8;transform:scaleX(1.028)">Dec</div>
<div class="t" style="left:541.9px;top:177.2px;font-size:5.4px;color:#d8d8d8;transform:scaleX(1.006)">1&quot;</div>
<div class="t" style="left:533.7px;top:185.7px;font-size:5.4px;color:#d8d8d8;transform:scaleX(1.021)">0.75&quot;</div>
<div class="t" style="left:536.5px;top:194.2px;font-size:5.4px;color:#d8d8d8;transform:scaleX(1.049)">0.5&quot;</div>
<div class="t" style="left:533.2px;top:202.6px;font-size:5.4px;color:#d8d8d8;transform:scaleX(1.063)">0.25&quot;</div>
<div class="t" style="left:505.5px;top:209.5px;font-size:5.4px;color:#d8d8d8;transform:scaleX(1.051)">RA</div>
<div class="t" style="left:448.7px;top:272.5px;font-size:5.2px;color:#f4f8ff;font-weight:bold;-webkit-text-stroke:0;transform:scaleX(0.946)">Star Profile</div>
<div class="t" style="left:449.4px;top:376.0px;font-size:6.2px;color:#e01414;transform:scaleX(0.955)">Mid row FWHM: 0.98</div>
<div class="t" style="left:160.9px;top:410.6px;font-size:6.0px;color:#282030;transform:scaleX(0.948)">m=139549 SNR=8.7</div>
<div class="t" style="left:285.7px;top:410.6px;font-size:6.0px;color:#282030;transform:scaleX(0.976)">East 0.24 px  6 ms</div>
<div class="t" style="left:348.4px;top:410.6px;font-size:6.0px;color:#282030;transform:scaleX(0.951)">South 0.35 px 9 ms</div>
<div class="t" style="left:490.6px;top:410.6px;font-size:6.0px;color:#282030;transform:scaleX(0.955)">Camera</div>
<div class="t" style="left:519.3px;top:410.6px;font-size:6.0px;color:#282030;transform:scaleX(1.096)">Mount</div>
<div class="t" style="left:560.3px;top:410.6px;font-size:6.0px;color:#282030;transform:scaleX(1.013)">Cal</div>
</body></html>
